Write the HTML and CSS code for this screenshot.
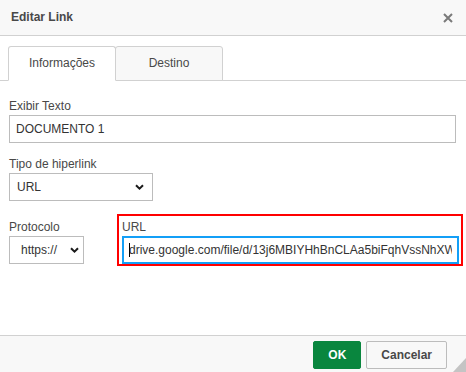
FILE: index.html
```html
<!DOCTYPE html>
<html lang="pt-BR">
<head>
  <meta charset="UTF-8" />
  <meta name="viewport" content="width=device-width, initial-scale=1.0" />
  <title>Editar Link</title>
  <link rel="stylesheet" href="styles.css">
</head>
<body>
  <div class="dialog">
    <div class="dialog-title">
      <span class="title-text">Editar Link</span>
      <svg class="close-icon" width="10" height="10" viewBox="0 0 10 10">
        <path d="M1 1L9 9M9 1L1 9" stroke="#7a7a7a" stroke-width="2" fill="none" />
      </svg>
    </div>

    <div class="tabs">
      <div class="tab active">Informações</div>
      <div class="tab">Destino</div>
    </div>

    <div class="dialog-body">
      <div class="field">
        <label for="displayText">Exibir Texto</label>
        <input type="text" id="displayText" class="text-input" value="DOCUMENTO 1" />
      </div>

      <div class="field field-gap">
        <label for="linkType">Tipo de hiperlink</label>
        <div class="select-wrap type-select">
          <select id="linkType">
            <option>URL</option>
          </select>
          <svg class="chevron" width="9" height="6" viewBox="0 0 9 6">
            <path d="M1 1.2L4.5 4.6L8 1.2" stroke="#1a1a1a" stroke-width="2" fill="none" />
          </svg>
        </div>
      </div>

      <div class="field-row">
        <div class="protocol-col">
          <label for="protocol">Protocolo</label>
          <div class="select-wrap protocol-select">
            <select id="protocol">
              <option>https://</option>
            </select>
            <svg class="chevron" width="9" height="6" viewBox="0 0 9 6">
              <path d="M1 1.2L4.5 4.6L8 1.2" stroke="#1a1a1a" stroke-width="2" fill="none" />
            </svg>
          </div>
        </div>
        <div class="url-col">
          <label for="url">URL</label>
          <input type="text" id="url" class="text-input focused" value="drive.google.com/file/d/13j6MBIYHhBnCLAa5biFqhVssNhXWqz8/view" />
          <span class="caret"></span>
        </div>
      </div>
    </div>

    <div class="dialog-footer">
      <button class="btn btn-ok">OK</button>
      <button class="btn btn-cancel">Cancelar</button>
      <span class="resize-grip"></span>
    </div>
  </div>
</body>
</html>
```

FILE: styles.css
```css
* {
  margin: 0;
  padding: 0;
  box-sizing: border-box;
}

body {
  font-family: 'Liberation Sans', Arial, sans-serif;
  font-size: 12px;
  color: #484848;
  background-color: #ffffff;
}

.dialog {
  width: 466px;
  height: 372px;
  display: flex;
  flex-direction: column;
  background-color: #ffffff;
  overflow: hidden;
}

.dialog-title {
  height: 36px;
  display: flex;
  justify-content: space-between;
  align-items: center;
  padding: 0 13px 1px 11px;
  background-color: #f8f8f8;
  border-bottom: 1px solid #d1d1d1;
}

.title-text {
  font-weight: bold;
  line-height: 34px;
  color: #484848;
}

.close-icon {
  display: block;
  margin-top: 1px;
}

.tabs {
  display: flex;
  align-items: flex-end;
  padding: 10px 0 0 8px;
  border-bottom: 1px solid #d1d1d1;
}

.tab {
  width: 108px;
  height: 35px;
  margin-bottom: -1px;
  line-height: 33px;
  text-align: center;
  color: #484848;
  background-color: #f8f8f8;
  border: 1px solid #d1d1d1;
  border-radius: 3px 3px 0 0;
}

.tab + .tab {
  margin-left: -1px;
}

.tab.active {
  position: relative;
  z-index: 1;
  background-color: #ffffff;
  border-bottom-color: #ffffff;
}

.dialog-body {
  flex: 1;
  padding: 17px 10px 0 9px;
}

.field label,
.protocol-col label,
.url-col label {
  display: block;
  line-height: 16px;
  margin-bottom: 1px;
  color: #484848;
}

.field-gap {
  margin-top: 13px;
}

.text-input {
  display: block;
  width: 100%;
  height: 28px;
  padding: 0 6px;
  font-family: inherit;
  font-size: 12px;
  color: #333;
  background-color: #ffffff;
  border: 1px solid #bcbcbc;
  outline: none;
}

.text-input.focused {
  border: 2px solid #139ff7;
  padding: 0 5px;
}

.select-wrap {
  position: relative;
}

.select-wrap select {
  display: block;
  width: 100%;
  height: 28px;
  font-family: inherit;
  font-size: 12px;
  color: #333;
  background-color: #ffffff;
  border: 1px solid #bcbcbc;
  border-radius: 0;
  appearance: none;
  -webkit-appearance: none;
  outline: none;
}

.select-wrap .chevron {
  position: absolute;
  top: 11px;
  pointer-events: none;
}

.type-select {
  width: 144px;
}

.type-select select {
  padding: 0 0 0 7px;
}

.type-select .chevron {
  right: 9px;
}

.protocol-select {
  width: 75px;
}

.protocol-select select {
  padding: 0 0 0 11px;
}

.protocol-select .chevron {
  right: 5px;
}

.field-row {
  display: flex;
  align-items: flex-start;
  margin-top: 13px;
}

.protocol-col {
  width: 108px;
  padding-top: 5px;
}

.url-col {
  position: relative;
  flex: 1;
  margin-right: -7px;
  padding: 3px 2px 0 3px;
  border: 2px solid #ff0000;
}

.caret {
  position: absolute;
  left: 10px;
  top: 27px;
  width: 1px;
  height: 14px;
  background-color: #000000;
}

.dialog-footer {
  height: 37px;
  display: flex;
  justify-content: flex-end;
  align-items: flex-start;
  padding-top: 5px;
  background-color: #f8f8f8;
  border-top: 1px solid #d1d1d1;
}

.btn {
  height: 28px;
  padding: 0 14px;
  font-family: inherit;
  font-size: 12px;
  font-weight: bold;
  border-radius: 2px;
  cursor: pointer;
}

.btn-ok {
  color: #ffffff;
  background-color: #09863e;
  border: 1px solid #09863e;
}

.btn-cancel {
  margin-left: 5px;
  color: #484848;
  background-color: #f8f8f8;
  border: 1px solid #bcbcbc;
}

.resize-grip {
  align-self: flex-end;
  width: 13px;
  height: 14px;
  margin-left: 6px;
  background-color: #c4c4c4;
  clip-path: polygon(100% 0, 100% 100%, 0 100%);
}
```
